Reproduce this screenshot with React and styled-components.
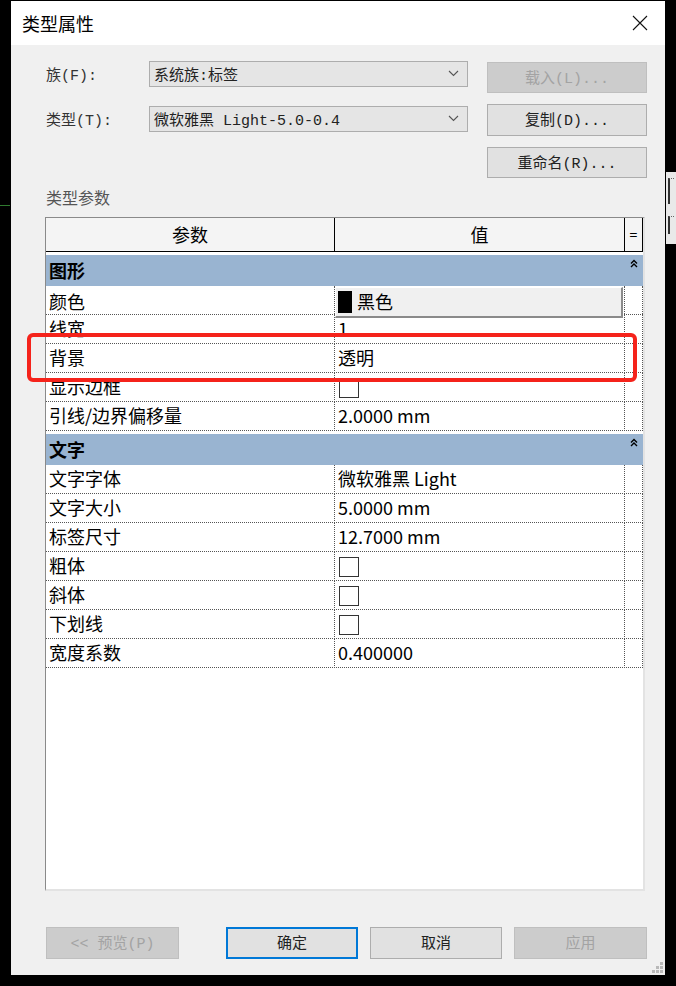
import React from "react";
import styled, { createGlobalStyle } from "styled-components";

const GlobalStyle = createGlobalStyle`
  html, body {
    margin: 0;
    padding: 0;
    background: #000;
  }
  * {
    box-sizing: border-box;
  }
`;

const UI_FONT = `"Noto Sans CJK SC", "Noto Sans", sans-serif`;
// the dialog controls use a fixed-width face for their latin parts
const CONTROL_FONT = `"Liberation Mono", "Noto Sans CJK SC", monospace`;

const groups = [
  {
    name: "图形",
    rows: [
      { label: "颜色", kind: "color", value: "黑色" },
      { label: "线宽", value: "1" },
      { label: "背景", value: "透明" },
      { label: "显示边框", kind: "check" },
      { label: "引线/边界偏移量", value: "2.0000 mm" },
    ],
  },
  {
    name: "文字",
    rows: [
      { label: "文字字体", value: "微软雅黑 Light" },
      { label: "文字大小", value: "5.0000 mm" },
      { label: "标签尺寸", value: "12.7000 mm" },
      { label: "粗体", kind: "check" },
      { label: "斜体", kind: "check" },
      { label: "下划线", kind: "check" },
      { label: "宽度系数", value: "0.400000" },
    ],
  },
];

function ChevronDown() {
  return (
    <svg width="11" height="7" viewBox="0 0 11 7">
      <path d="M1 1 L5.5 5.5 L10 1" fill="none" stroke="#555" strokeWidth="1.1" />
    </svg>
  );
}

function CloseIcon() {
  return (
    <svg width="16" height="16" viewBox="0 0 16 16">
      <path d="M1 1 L15 15 M15 1 L1 15" stroke="#111" strokeWidth="1.1" />
    </svg>
  );
}

function CollapseIcon() {
  return (
    <svg width="8" height="9" viewBox="0 0 8 9">
      <path
        d="M1 4.5 L4 1.5 L7 4.5 M1 8 L4 5 L7 8"
        fill="none"
        stroke="#000"
        strokeWidth="1.4"
      />
    </svg>
  );
}

function App() {
  return (
    <>
      <GlobalStyle />
      <Frame>
        <LeftMark />
        <RightScrap>
          <ScrapBar $top={6} $h={26} />
          <ScrapBar $top={44} $h={18} />
        </RightScrap>
        <Dialog>
          <TitleBar>
            <Title>类型属性</Title>
            <CloseIcon />
          </TitleBar>
          <Body>
            <TopSection>
              <Fields>
                <FieldRow>
                  <FieldLabel>族(F):</FieldLabel>
                  <Select>
                    <span>系统族:标签</span>
                    <ChevronDown />
                  </Select>
                </FieldRow>
                <FieldRow>
                  <FieldLabel>类型(T):</FieldLabel>
                  <Select>
                    <span>微软雅黑 Light-5.0-0.4</span>
                    <ChevronDown />
                  </Select>
                </FieldRow>
              </Fields>
              <SideButtons>
                <DialogButton $h={31} $disabled>载入(L)...</DialogButton>
                <DialogButton $h={32}>复制(D)...</DialogButton>
                <DialogButton $h={31}>重命名(R)...</DialogButton>
              </SideButtons>
            </TopSection>

            <SectionLabel>类型参数</SectionLabel>

            <TableFrame>
              <HeaderRow>
                <HeaderCell>参数</HeaderCell>
                <HeaderCell>值</HeaderCell>
                <HeaderCell $small>=</HeaderCell>
              </HeaderRow>
              {groups.map((g) => (
                <React.Fragment key={g.name}>
                  <GroupRow>
                    <GroupName>{g.name}</GroupName>
                    <GroupToggle>
                      <CollapseIcon />
                    </GroupToggle>
                  </GroupRow>
                  {g.rows.map((r) => (
                    <DataRow key={r.label}>
                      <Cell>{r.label}</Cell>
                      <Cell>
                        {r.kind === "color" && (
                          <ColorButton>
                            <Swatch />
                            {r.value}
                          </ColorButton>
                        )}
                        {r.kind === "check" && <CheckBox />}
                        {!r.kind && r.value}
                      </Cell>
                      <Cell />
                    </DataRow>
                  ))}
                </React.Fragment>
              ))}
            </TableFrame>

            <BottomBar>
              <DialogButton $w={133} $h={32} $disabled>
                {"<< 预览(P)"}
              </DialogButton>
              <BottomGroup>
                <DialogButton $w={132} $h={32} $primary>确定</DialogButton>
                <DialogButton $w={132} $h={32}>取消</DialogButton>
                <DialogButton $w={133} $h={32} $disabled>应用</DialogButton>
              </BottomGroup>
            </BottomBar>
          </Body>
          <Grip>
            <GripDot $x={8} $y={0} />
            <GripDot $x={4} $y={4} />
            <GripDot $x={8} $y={4} />
            <GripDot $x={0} $y={8} />
            <GripDot $x={4} $y={8} />
            <GripDot $x={8} $y={8} />
          </Grip>
        </Dialog>
        <Highlight />
      </Frame>
    </>
  );
}

export default App;

const Frame = styled.div`
  position: relative;
  width: 676px;
  height: 986px;
  background: #000;
  padding: 1px 11px 11px 11px;
  font-family: ${UI_FONT};
`;

const LeftMark = styled.div`
  position: absolute;
  left: 0;
  top: 205px;
  width: 10px;
  height: 1px;
  background: #2f7a2f;
`;

const RightScrap = styled.div`
  position: absolute;
  left: 666px;
  top: 172px;
  width: 10px;
  height: 72px;
  background: #e9e9e9;
`;

const ScrapBar = styled.div`
  position: absolute;
  left: 2px;
  top: ${(p) => p.$top}px;
  width: 6px;
  height: ${(p) => p.$h}px;
  border-left: 2px solid #333;
  border-top: 1px dotted #666;
`;

const Dialog = styled.div`
  position: relative;
  width: 654px;
  height: 974px;
  background: #f0f0f0;
  display: flex;
  flex-direction: column;
`;

const TitleBar = styled.div`
  height: 44px;
  background: #fff;
  display: flex;
  align-items: center;
  justify-content: space-between;
  padding: 0 17px 0 11px;
`;

const Title = styled.div`
  font-size: 18px;
  color: #000;
`;

const Body = styled.div`
  flex: 1;
  display: flex;
  flex-direction: column;
  padding: 16px 18px 16px 35px;
`;

const TopSection = styled.div`
  display: flex;
  height: 117px;
`;

const Fields = styled.div`
  width: 422px;
  display: flex;
  flex-direction: column;
  gap: 19px;
`;

const FieldRow = styled.div`
  display: flex;
  align-items: center;
  height: 26px;
`;

const FieldLabel = styled.div`
  width: 103px;
  font-family: ${CONTROL_FONT};
  font-size: 15px;
  color: #333;
  padding-bottom: 1px;
`;

const Select = styled.div`
  width: 319px;
  height: 26px;
  border: 1px solid #adadad;
  background: #e5e5e5;
  display: flex;
  align-items: center;
  justify-content: space-between;
  padding: 0 8px 1px 4px;
  font-family: ${CONTROL_FONT};
  font-size: 15px;
  color: #222;
`;

const SideButtons = styled.div`
  margin-left: 19px;
  width: 160px;
  padding-top: 1px;
  display: flex;
  flex-direction: column;
  gap: 11px;
`;

const DialogButton = styled.div`
  width: ${(p) => (p.$w ? `${p.$w}px` : "100%")};
  height: ${(p) => p.$h}px;
  display: flex;
  align-items: center;
  justify-content: center;
  padding-bottom: 2px;
  font-family: ${CONTROL_FONT};
  font-size: 15px;
  color: ${(p) => (p.$disabled ? "#a3a3a3" : "#222")};
  background: ${(p) => (p.$disabled ? "#cccccc" : "#e1e1e1")};
  border: ${(p) =>
    p.$primary ? "2px solid #0078d7" : `1px solid ${p.$disabled ? "#bfbfbf" : "#adadad"}`};
`;

const SectionLabel = styled.div`
  height: 39px;
  display: flex;
  align-items: center;
  padding-bottom: 1px;
  font-size: 16px;
  color: #555;
`;

const TableFrame = styled.div`
  margin-left: -1px;
  width: 600px;
  height: 674px;
  background: #fff;
  border-style: solid;
  border-width: 1px 2px 2px 1px;
  border-color: #8a8a8a #e3e3e3 #e3e3e3 #8a8a8a;
  display: flex;
  flex-direction: column;
`;

const columns = `grid-template-columns: 289px 290px 18px;`;

const HeaderRow = styled.div`
  display: grid;
  ${columns}
  height: 34px;
  border-bottom: 1px solid #000;
  background: #f4f4f4;
`;

const HeaderCell = styled.div`
  display: flex;
  align-items: center;
  justify-content: center;
  padding-bottom: 1px;
  border-right: 1px solid #000;
  font-size: ${(p) => (p.$small ? "14px" : "18px")};
  color: #000;
`;

const GroupRow = styled.div`
  display: grid;
  ${columns}
  height: 34px;
  border-top: 3px solid #fff;
  background: #99b4d1;
`;

const GroupName = styled.div`
  grid-column: 1 / 3;
  display: flex;
  align-items: center;
  padding: 0 0 2px 3px;
  font-size: 18px;
  font-weight: 700;
  color: #000;
`;

const GroupToggle = styled.div`
  display: flex;
  justify-content: center;
  padding-top: 4px;
`;

const DataRow = styled.div`
  display: grid;
  ${columns}
  height: 29px;
  border-bottom: 1px dotted #555;
`;

const Cell = styled.div`
  display: flex;
  align-items: center;
  padding: 0 0 3px 3px;
  border-right: 1px dotted #555;
  font-size: 18px;
  color: #000;
  white-space: nowrap;
`;

const ColorButton = styled.div`
  flex: 1;
  align-self: stretch;
  margin: 1px 1px -3px -3px;
  display: flex;
  align-items: center;
  gap: 5px;
  padding: 0 0 2px 2px;
  background: #f0f0f0;
  border-style: solid;
  border-width: 1px 2px 2px 1px;
  border-color: #fff #8a8a8a #8a8a8a #fff;
  font-size: 18px;
`;

const Swatch = styled.div`
  width: 14px;
  height: 22px;
  margin-top: 2px;
  background: #000;
`;

const CheckBox = styled.div`
  width: 20px;
  height: 20px;
  margin: 3px 0 0 1px;
  border: 1px solid #333;
  background: #fff;
`;

const BottomBar = styled.div`
  margin-top: 36px;
  height: 32px;
  display: flex;
  gap: 47px;
`;

const BottomGroup = styled.div`
  display: flex;
  gap: 12px;
`;

const Grip = styled.div`
  position: absolute;
  right: 2px;
  bottom: 2px;
  width: 11px;
  height: 11px;
`;

const GripDot = styled.div`
  position: absolute;
  left: ${(p) => p.$x}px;
  top: ${(p) => p.$y}px;
  width: 3px;
  height: 3px;
  background: #b9b9b9;
`;

const Highlight = styled.div`
  position: absolute;
  left: 27px;
  top: 333px;
  width: 610px;
  height: 49px;
  border: 4.5px solid #f5231b;
  border-radius: 6px;
  pointer-events: none;
`;
